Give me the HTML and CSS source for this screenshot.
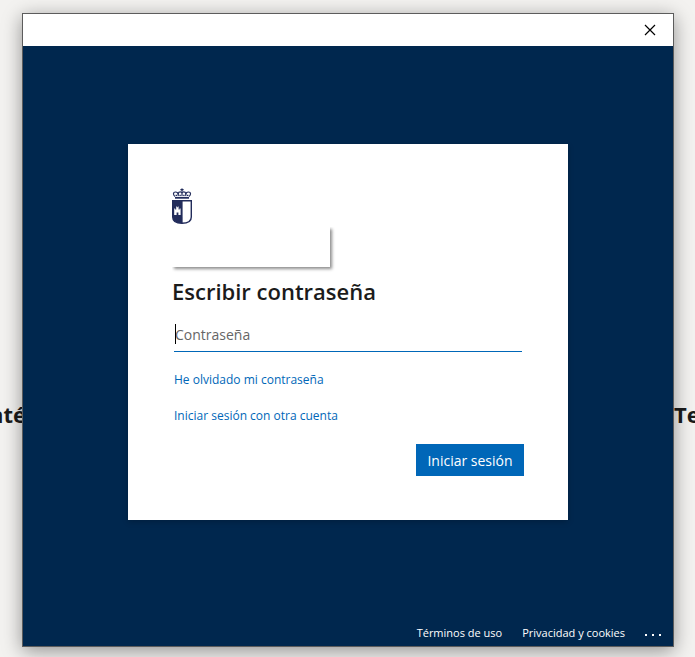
FILE: index.html
```
<!DOCTYPE html>
<html lang="es">
  <head>
    <meta charset="UTF-8" />
    <meta name="viewport" content="width=device-width, initial-scale=1" />
    <title>Iniciar sesión</title>
    <link rel="stylesheet" href="styles.css">
  </head>
  <body>
    <!-- página de fondo, asoma a los lados de la ventana -->
    <div class="gutter gutter-left"><h2>nté</h2></div>

    <div class="window">
      <div class="titlebar">
        <button class="close" type="button" aria-label="Cerrar">
          <svg width="12" height="12" viewBox="0 0 12 12">
            <path d="M1 1 L11 11 M11 1 L1 11" stroke="#000" stroke-width="1.2" fill="none" />
          </svg>
        </button>
      </div>

      <main class="content">
        <form class="card">
          <svg class="logo" width="20" height="36" viewBox="0 0 20 36">
            <!-- corona -->
            <g fill="none" stroke="#222c5b" stroke-width="1.2">
              <path d="M10 0.4 V3.4 M8.4 1.6 H11.6" stroke-width="1.4" />
              <path d="M3 8.4 C0.8 6.8 1 4 3.4 4 C5.2 4 6.2 4.8 6.2 6.4" />
              <path d="M17 8.4 C19.2 6.8 19 4 16.6 4 C14.8 4 13.8 4.8 13.8 6.4" />
              <path d="M6.2 8 V5.6 C6.6 3.2 10 3.2 10 5.6 V8 M13.8 8 V5.6 C13.4 3.2 10 3.2 10 5.6" />
              <path d="M3.6 7.4 H5 M7.4 7.4 H8.8 M11.2 7.4 H12.6 M15 7.4 H16.4" stroke-width="1.4" />
              <path d="M3 9.8 H17" stroke-width="1.8" />
            </g>
            <!-- escudo -->
            <path d="M0.7 12.7 H19.3 V29 Q19.3 35.3 10 35.3 Q0.7 35.3 0.7 29 Z" fill="#fff" stroke="#222c5b" stroke-width="1.4" />
            <path d="M0.7 12.7 H10.6 V35.3 Q0.7 35.3 0.7 29 Z" fill="#222c5b" />
            <path d="M2.2 20.4 H3.2 V21.4 H4.2 V18.4 H5 V19.2 H5.8 V18.4 H6.6 V21.4 H7.6 V20.4 H8.6 V27 H6.4 V24.6 H4.6 V27 H2.2 Z" fill="#fff" />
          </svg>
          <div class="identity"></div>
          <h1>Escribir contraseña</h1>
          <div class="field">
            <input type="password" id="password" placeholder="Contraseña" aria-label="Contraseña" />
            <span class="caret"></span>
          </div>
          <a class="link" href="#">He olvidado mi contraseña</a>
          <a class="link" href="#">Iniciar sesión con otra cuenta</a>
          <button class="submit" type="submit">Iniciar sesión</button>
        </form>
      </main>

      <footer class="footer">
        <a href="#">Términos de uso</a>
        <a href="#">Privacidad y cookies</a>
        <button class="more" type="button" aria-label="Más opciones">
          <svg width="18" height="8" viewBox="0 0 18 8" fill="#fff">
            <rect x="0" y="6" width="2" height="2" />
            <rect x="7" y="6" width="2" height="2" />
            <rect x="14" y="6" width="2" height="2" />
          </svg>
        </button>
      </footer>
    </div>

    <div class="gutter gutter-right"><h2>Te</h2></div>
  </body>
</html>
```
FILE: styles.css
```
* {
  box-sizing: border-box;
}
body {
  display: flex;
  min-height: 100vh;
  margin: 0;
  overflow: hidden;
  background: #f3f2f0;
  color: #1b1b1b;
  font-family: "Open Sans", "Noto Sans", sans-serif;
}
button {
  padding: 0;
  border: 0;
  font-family: inherit;
  cursor: pointer;
}
a {
  text-decoration: none;
}

/* ----- Fondo ----- */
.gutter {
  display: flex;
  flex: none;
  width: 22px;
  padding-top: 398px;
}
.gutter-left {
  justify-content: flex-end;
}
.gutter-left h2 {
  margin-right: -4px;
}
.gutter-right {
  width: 21px;
}
.gutter h2 {
  margin-top: 0;
  margin-bottom: 0;
  font-size: 22px;
  font-weight: 700;
  line-height: 32px;
}

/* ----- Ventana ----- */
.window {
  position: relative;
  display: flex;
  flex: 1;
  flex-direction: column;
  margin: 13px 0 10px;
  border: 1px solid #5c5c5c;
  background: #00274e;
  box-shadow: 0 4px 18px rgba(0, 0, 0, 0.4);
}
.titlebar {
  display: flex;
  justify-content: flex-end;
  height: 32px;
  background: #fff;
}
.close {
  display: flex;
  align-items: center;
  justify-content: center;
  width: 46px;
  background: none;
}
.content {
  display: flex;
  flex: 1;
  align-items: center;
  justify-content: center;
}

/* ----- Tarjeta ----- */
.card {
  display: flex;
  flex-direction: column;
  align-items: flex-start;
  width: 440px;
  padding: 44px;
  background: #fff;
  box-shadow: 0 2px 6px rgba(0, 0, 0, 0.2);
}
.logo {
  display: block;
}
.identity {
  width: 158px;
  height: 40px;
  margin-top: 3px;
  background: #fff;
  box-shadow: 2px 2px 3px rgba(0, 0, 0, 0.45);
  clip-path: inset(0 -6px -6px 0);
}
.card h1 {
  margin: 8px 0 12px;
  font-size: 22px;
  font-weight: 600;
  line-height: 32px;
}
.field {
  position: relative;
  width: 100%;
  margin-bottom: 18px;
  padding: 0 2px;
}
.field input {
  display: block;
  width: 100%;
  height: 33px;
  padding: 0 0 2px 1px;
  border: 0;
  border-bottom: 1px solid #0067b8;
  outline: 0;
  background: none;
  font-family: inherit;
  font-size: 14px;
}
.field input::placeholder {
  color: #666;
  opacity: 1;
}
.caret {
  position: absolute;
  top: 5px;
  left: 3px;
  width: 1px;
  height: 20px;
  background: #000;
}
.link {
  margin: 0 2px 16px;
  color: #0067b8;
  font-size: 12px;
  line-height: 20px;
}
.submit {
  align-self: flex-end;
  width: 108px;
  height: 32px;
  margin-top: 2px;
  background: #0067b8;
  color: #fff;
  font-size: 14px;
}

/* ----- Pie ----- */
.footer {
  display: flex;
  align-items: center;
  justify-content: flex-end;
  gap: 20px;
  height: 28px;
  padding-right: 10px;
}
.footer a {
  color: #fff;
  font-size: 11px;
}
.more {
  display: flex;
  background: none;
}
```
